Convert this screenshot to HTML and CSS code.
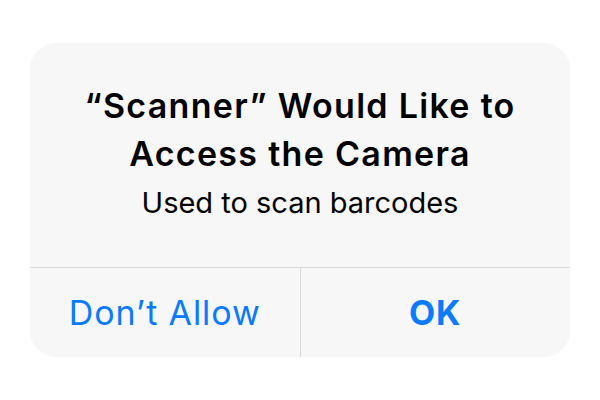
FILE: index.html
```html
<!DOCTYPE html>
<html lang="en">
<head>
    <meta charset="UTF-8">
    <meta name="viewport" content="width=device-width, initial-scale=1.0">
    <title>Camera Access</title>
    <link rel="stylesheet" href="styles.css">
</head>
<body>
    <div class="alert">
        <div class="alert-body">
            <h1 class="alert-title">“Scanner” Would Like to Access the Camera</h1>
            <p class="alert-message">Used to scan barcodes</p>
        </div>
        <div class="alert-actions">
            <button class="alert-btn">Don’t Allow</button>
            <button class="alert-btn alert-btn-default">OK</button>
        </div>
    </div>
</body>
</html>
```

FILE: styles.css
```css
* {
    margin: 0;
    padding: 0;
    box-sizing: border-box;
}

body {
    font-family: Inter, "Noto Sans", sans-serif;
    background: #fff;
    min-height: 100vh;
    display: flex;
    align-items: center;
    justify-content: center;
}

.alert {
    width: 540px;
    height: 314px;
    background: #f7f7f7;
    border-radius: 26px;
    display: flex;
    flex-direction: column;
    overflow: hidden;
}

.alert-body {
    height: 225px;
    padding: 39px 20px 0;
    text-align: center;
    border-bottom: 1px solid #d8d8d8;
}

.alert-title {
    font-size: 34px;
    line-height: 48px;
    font-weight: 600;
    letter-spacing: 1.3px;
    color: #000;
    padding: 0 20px;
}

.alert-message {
    font-size: 29px;
    line-height: 36px;
    color: #000;
    margin-top: 7px;
}

.alert-actions {
    flex: 1;
    display: flex;
}

.alert-btn {
    flex: 1;
    background: none;
    border: none;
    font-family: inherit;
    font-size: 34px;
    letter-spacing: 0.9px;
    color: #0a7aff;
    cursor: pointer;
}

.alert-btn + .alert-btn {
    border-left: 1px solid #d8d8d8;
}

.alert-btn-default {
    font-weight: 700;
}
```
